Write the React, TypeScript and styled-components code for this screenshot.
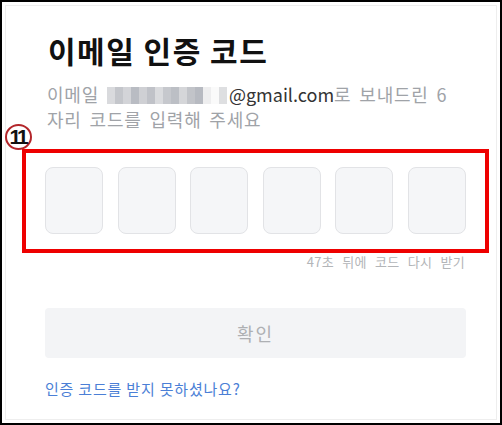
import styled, { createGlobalStyle } from "styled-components";

const GlobalStyle = createGlobalStyle`
  html, body {
    margin: 0;
    padding: 0;
    background: #fff;
  }
  body {
    font-family: "Noto Sans CJK KR", "Noto Sans", sans-serif;
  }
`;

const Frame = styled.div`
  position: relative;
  box-sizing: border-box;
  width: 502px;
  height: 425px;
  border: 2px solid #000;
  background: #fff;
  box-shadow: inset 0 0 0 3px #fff, inset 0 0 0 4px #eeeeee;
  padding: 30px 34px 0 43px;
  overflow: hidden;
`;

const Title = styled.h1`
  margin: 0;
  padding-left: 3px;
  font-size: 30px;
  line-height: 36px;
  font-weight: 700;
  color: #111;
  letter-spacing: 1.5px;
`;

const Description = styled.p`
  margin: 14px 0 0;
  padding-left: 2px;
  font-size: 18px;
  line-height: 25px;
  color: #a0a3a8;
  letter-spacing: 0.8px;
  word-spacing: 3px;
`;

const Email = styled.span`
  color: #333;
  letter-spacing: 0;
`;

const Mosaic = styled.span`
  display: inline-flex;
  vertical-align: -2px;
  height: 17px;
  margin-right: 2px;
`;

const Tile = styled.span<{ $tone: string; $w: number }>`
  display: inline-block;
  width: ${(p) => p.$w}px;
  height: 100%;
  background: ${(p) => p.$tone};
`;

const Annotation = styled.div`
  margin: 17px -23px 0;
  border: 4px solid #ee0000;
  padding: 14px 19px 15px;
`;

const CodeRow = styled.div`
  display: flex;
  justify-content: space-between;
`;

const CodeBox = styled.div`
  box-sizing: border-box;
  width: 58px;
  height: 67px;
  border: 1px solid #e2e3e6;
  border-radius: 8px;
  background: #f5f6f8;
`;

const Timer = styled.div`
  text-align: right;
  padding-right: 1px;
  font-size: 13px;
  line-height: 18px;
  color: #b3b5b8;
  letter-spacing: 0.3px;
  word-spacing: 5px;
`;

const ConfirmButton = styled.button`
  display: block;
  width: 100%;
  height: 50px;
  margin-top: 37px;
  border: none;
  border-radius: 4px;
  background: #f3f4f6;
  color: #aeb0b3;
  font-family: inherit;
  font-size: 18px;
  letter-spacing: 2px;
`;

const HelpLink = styled.a`
  display: block;
  margin-top: 21px;
  font-size: 15px;
  line-height: 20px;
  color: #4b7fd6;
  text-decoration: none;
  letter-spacing: 0.8px;
`;

const StepBadge = styled.div`
  position: absolute;
  left: 3px;
  top: 122px;
  box-sizing: border-box;
  width: 27px;
  height: 26px;
  border: 2px solid #b3262a;
  border-radius: 50%;
  display: flex;
  align-items: center;
  justify-content: center;
  font-family: "Liberation Sans", Arial, sans-serif;
  font-size: 21px;
  font-weight: 700;
  letter-spacing: -3px;
  color: #111;
  padding-right: 2px;
`;

const mosaicTiles = [
  { w: 8, tone: "#d9dadd" },
  { w: 8, tone: "#c4c6cb" },
  { w: 8, tone: "#d3d4d8" },
  { w: 8, tone: "#b9bcc3" },
  { w: 8, tone: "#cfd0d4" },
  { w: 8, tone: "#c0c2c8" },
  { w: 8, tone: "#dadbde" },
  { w: 8, tone: "#c6c8cd" },
  { w: 8, tone: "#bcbfc5" },
  { w: 8, tone: "#d5d6d9" },
  { w: 8, tone: "#c2c4c9" },
  { w: 8, tone: "#b7bac1" },
  { w: 8, tone: "#eeeeef" },
  { w: 8, tone: "#fafafa" },
  { w: 8, tone: "#dedfe1" },
];

export default function App() {
  return (
    <Frame>
      <GlobalStyle />
      <Title>이메일 인증 코드</Title>
      <Description>
        이메일{" "}
        <Mosaic>
          {mosaicTiles.map((t, i) => (
            <Tile key={i} $w={t.w} $tone={t.tone} />
          ))}
        </Mosaic>
        <Email>@gmail.com</Email>로 보내드린 6 자리 코드를 입력해 주세요
      </Description>
      <Annotation>
        <CodeRow>
          {Array.from({ length: 6 }).map((_, i) => (
            <CodeBox key={i} />
          ))}
        </CodeRow>
      </Annotation>
      <Timer>47초 뒤에 코드 다시 받기</Timer>
      <ConfirmButton>확인</ConfirmButton>
      <HelpLink href="#">인증 코드를 받지 못하셨나요?</HelpLink>
      <StepBadge>11</StepBadge>
    </Frame>
  );
}
